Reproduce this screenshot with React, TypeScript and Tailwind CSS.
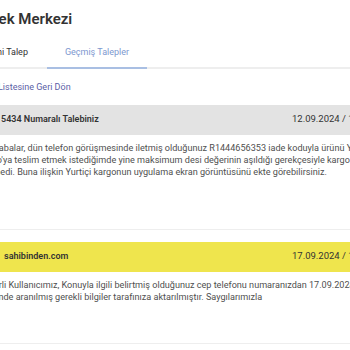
export default function App() {
  return (
    <div
      className="w-[350px] h-[350px] overflow-hidden bg-white"
      style={{ fontFamily: "Roboto, 'Liberation Sans', sans-serif" }}
    >
      <div className="ml-[-32px] w-[445px]">
        <h1 className="pt-[8px] text-[15px] leading-[22px] font-semibold text-[#333]">Destek Merkezi</h1>

        <div className="mt-[16px] flex border-b-2 border-[#eeeeee]">
          <button className="w-[79px] pb-[7px] text-center text-[9px] text-[#333]">Yeni Talep</button>
          <button className="-mb-[2px] w-[100px] border-b-2 border-[#a9bfe3] pb-[7px] text-center text-[9px] text-[#7d98cf]">
            Geçmiş Talepler
          </button>
        </div>

        <a className="mt-[12px] block pl-[6px] text-[9px] leading-[12px] text-[#5b5ea6]">Talep Listesine Geri Dön</a>

        <div className="mt-[12px] border-b border-[#eeeeee] pb-[51px]">
          <div className="flex h-[30px] items-center justify-between bg-[#e3e3e3] pl-[33px] pr-[41px] text-[9px] text-[#333]">
            <span className="font-semibold">5434 Numaralı Talebiniz</span>
            <span className="text-[9.5px]">12.09.2024 / 14:32</span>
          </div>
          <p className="mt-[7px] whitespace-nowrap pl-[10px] text-[9.1px] leading-[12px] text-[#4f4f4f]">
            Merhabalar, dün telefon görüşmesinde iletmiş olduğunuz R1444656353 iade koduyla ürünü Yurtiçi
            <br />
            Kargo'ya teslim etmek istediğimde yine maksimum desi değerinin aşıldığı gerekçesiyle kargo kabul
            <br />
            edilmedi. Buna ilişkin Yurtiçi kargonun uygulama ekran görüntüsünü ekte görebilirsiniz.
          </p>
        </div>

        <div className="mt-[12px] border-b border-[#eeeeee] pb-[40px]">
          <div className="flex h-[30px] items-center justify-between bg-[#efe54d] pl-[36px] pr-[41px] text-[9px] text-[#333]">
            <span className="font-semibold">sahibinden.com</span>
            <span className="text-[9.5px]">17.09.2024 / 15:10</span>
          </div>
          <p className="mt-[7px] whitespace-nowrap pl-[10px] text-[9.1px] leading-[12px] text-[#4f4f4f]">
            Değerli Kullanıcımız, Konuyla ilgili belirtmiş olduğunuz cep telefonu numaranızdan 17.09.2024
            <br />
            tarihinde aranılmış gerekli bilgiler tarafınıza aktarılmıştır. Saygılarımızla
          </p>
        </div>
      </div>
    </div>
  );
}
